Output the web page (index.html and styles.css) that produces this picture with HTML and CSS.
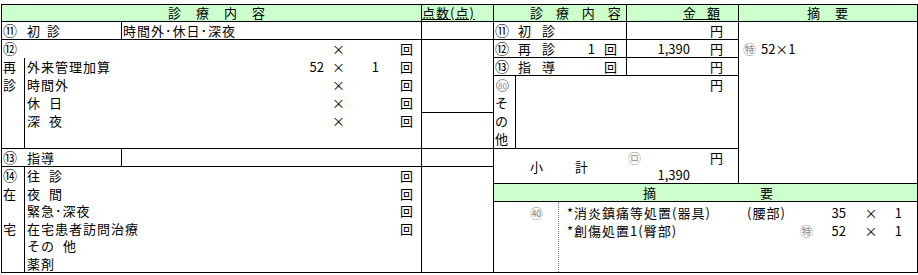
FILE: index.html
```html
<!DOCTYPE html>
<html lang="ja">
<head>
<meta charset="utf-8">
<title>診療内容</title>
<link rel="stylesheet" href="styles.css">
</head>
<body>
<div class="sheet">
  <div class="lp">
    <div class="band hdr">
      <div class="main hd-main">診　療　内　容</div>
      <div class="pts hd-pts"><span class="ul">点数(点)</span></div>
    </div>
    <div class="band h18">
      <div class="main split">
        <div class="sp-a"><span class="cn">⑪</span>初 診</div>
        <div class="sp-b">時間外･休日･深夜</div>
      </div>
      <div class="pts"></div>
    </div>
    <div class="band b12">
      <div class="main">
        <div class="g"><div class="lb"><span class="cn">⑫</span></div><div class="tx"></div><div class="n1"></div><div class="x">×</div><div class="n2"></div><div class="kai">回</div></div>
        <div class="g"><div class="lb bd">再</div><div class="tx">外来管理加算</div><div class="n1">52</div><div class="x">×</div><div class="n2">1</div><div class="kai">回</div></div>
        <div class="g"><div class="lb bd">診</div><div class="tx">時間外</div><div class="n1"></div><div class="x">×</div><div class="n2"></div><div class="kai">回</div></div>
        <div class="g"><div class="lb bd"></div><div class="tx">休 日</div><div class="n1"></div><div class="x">×</div><div class="n2"></div><div class="kai">回</div></div>
        <div class="g"><div class="lb bd"></div><div class="tx">深 夜</div><div class="n1"></div><div class="x">×</div><div class="n2"></div><div class="kai">回</div></div>
        <div class="g"><div class="lb bd"></div><div class="tx"></div><div class="n1"></div><div class="x"></div><div class="n2"></div><div class="kai"></div></div>
      </div>
      <div class="pts">
        <div class="pa"></div>
        <div class="pb"></div>
      </div>
    </div>
    <div class="band h18">
      <div class="main split">
        <div class="sp-a"><span class="cn">⑬</span>指導</div>
        <div class="sp-b"></div>
      </div>
      <div class="pts"></div>
    </div>
    <div class="band b14">
      <div class="main">
        <div class="g g17"><div class="lb bd"><span class="cn">⑭</span></div><div class="tx">往 診</div><div class="n1"></div><div class="x"></div><div class="n2"></div><div class="kai">回</div></div>
        <div class="g g17"><div class="lb bd">在</div><div class="tx">夜 間</div><div class="n1"></div><div class="x"></div><div class="n2"></div><div class="kai">回</div></div>
        <div class="g g17"><div class="lb bd"></div><div class="tx">緊急･深夜</div><div class="n1"></div><div class="x"></div><div class="n2"></div><div class="kai">回</div></div>
        <div class="g g17"><div class="lb bd">宅</div><div class="tx">在宅患者訪問治療</div><div class="n1"></div><div class="x"></div><div class="n2"></div><div class="kai">回</div></div>
        <div class="g g17"><div class="lb bd"></div><div class="tx">その 他</div><div class="n1"></div><div class="x"></div><div class="n2"></div><div class="kai"></div></div>
        <div class="g g17"><div class="lb bd"></div><div class="tx">薬剤</div><div class="n1"></div><div class="x"></div><div class="n2"></div><div class="kai"></div></div>
      </div>
      <div class="pts"></div>
    </div>
  </div>

  <div class="rp">
    <div class="rh">
      <div class="rc-a">診 療 内 容</div>
      <div class="rc-b"><span class="ul">金 額</span></div>
      <div class="rc-c">摘 要</div>
    </div>
    <div class="rbody">
      <div class="rl">
        <div class="rrow">
          <div class="rc1"><div class="rlab"><span class="cn">⑪</span>初 診</div><div class="rn"></div><div class="rk"></div></div>
          <div class="rc2"><div class="amt"></div><div class="yen">円</div></div>
        </div>
        <div class="rrow">
          <div class="rc1"><div class="rlab"><span class="cn">⑫</span>再 診</div><div class="rn">1</div><div class="rk">回</div></div>
          <div class="rc2"><div class="amt">1,390</div><div class="yen">円</div></div>
        </div>
        <div class="rrow">
          <div class="rc1"><div class="rlab"><span class="cn">⑬</span>指 導</div><div class="rn"></div><div class="rk">回</div></div>
          <div class="rc2"><div class="amt"></div><div class="yen">円</div></div>
        </div>
        <div class="b80">
          <div class="l80">
            <div class="lc"><span class="c80">80</span></div>
            <div class="lc">そ</div>
            <div class="lc">の</div>
            <div class="lc">他</div>
          </div>
          <div class="c80col"><div class="yen">円</div></div>
        </div>
        <div class="sub">
          <div class="subl"><span>小</span><span class="kei">計</span></div>
          <div class="subr">
            <div class="sl1"><span class="gc ro">㋺</span><div class="yen">円</div></div>
            <div class="sl2"><div class="amt">1,390</div></div>
          </div>
        </div>
      </div>
      <div class="memo"><span class="gc">㊕</span> 52×1</div>
    </div>
    <div class="rh2"><span>摘</span><span class="you">要</span></div>
    <div class="ent">
      <div class="el"><span class="gc">㊵</span></div>
      <div class="er">
        <div class="erow"><div class="en">*消炎鎮痛等処置(器具)</div><div class="ep">(腰部)</div><div class="et"></div><div class="ea">35</div><div class="ex">×</div><div class="eb">1</div></div>
        <div class="erow"><div class="en">*創傷処置1(臀部)</div><div class="ep"></div><div class="et"><span class="gc">㊕</span></div><div class="ea">52</div><div class="ex">×</div><div class="eb">1</div></div>
      </div>
    </div>
  </div>
</div>
</body>
</html>
```

FILE: styles.css
```css
* { box-sizing: border-box; }
html, body { background: #fff; }
body {
  margin: 0;
  padding: 4px 0 0 1px;
  font-family: "Noto Sans CJK JP", sans-serif;
  font-size: 13px;
  letter-spacing: 1px;
  word-spacing: 2px;
  line-height: 18px;
  color: #000;
}
.sheet {
  display: flex;
  width: 917px;
  border-top: 1px solid #000;
  border-left: 1px solid #000;
}
.ul { text-decoration: underline; }
.cn {
  display: inline-block;
  width: 14px;
  margin-right: 10px;
  font-family: "DejaVu Sans", "Noto Sans CJK JP", sans-serif;
  font-size: 14px;
  letter-spacing: 0;
}
.gc {
  font-size: 13px;
  letter-spacing: 0;
  color: #8a8a8a;
}

/* left part */
.lp { width: 492px; }
.band { display: flex; border-bottom: 1px solid #000; }
.main { width: 420px; border-right: 1px solid #000; }
.pts { width: 72px; border-right: 1px solid #000; }
.hdr { height: 17px; line-height: 16px; background: #ccffcc; white-space: nowrap; }
.hd-main { padding-left: 166px; }
.hd-pts { letter-spacing: 1px; word-spacing: 0; }
.h18 { height: 18px; line-height: 17px; }
.split { display: flex; white-space: nowrap; }
.sp-a { width: 120px; border-right: 1px solid #000; padding-left: 1px; }
.sp-b { flex: 1; padding-left: 1px; }
.b12 { height: 109px; }
.b14 { height: 106px; }
.g {
  display: grid;
  grid-template-columns: 23px 1fr 40px 15px 33px 42px;
  height: 18px;
  white-space: nowrap;
}
.g17 { height: 17.5px; line-height: 17.5px; }
.lb { padding-left: 1px; }
.lb .cn { margin-right: 0; }
.lb.bd { border-right: 1px solid #000; }
.tx { padding-left: 2px; word-spacing: 4px; }
.n1 { text-align: right; padding-right: 7px; letter-spacing: 0; }
.x { text-align: center; letter-spacing: 0; }
.n2 { text-align: right; letter-spacing: 0; }
.kai { padding-left: 21px; }
.pa { height: 73px; border-bottom: 1px solid #000; }

/* right part */
.rp { width: 424px; }
.rh {
  display: flex;
  height: 17px;
  line-height: 16px;
  background: #ccffcc;
  border-bottom: 1px solid #000;
  white-space: nowrap;
}
.rc-a { width: 133px; border-right: 1px solid #000; padding-left: 36px; word-spacing: 8px; }
.rc-b { width: 112px; border-right: 1px solid #000; padding-left: 56px; letter-spacing: 0; word-spacing: 8px; }
.rc-c { width: 179px; border-right: 1px solid #000; text-align: center; word-spacing: 10px; }
.rbody { display: flex; border-bottom: 1px solid #000; }
.rl { width: 245px; border-right: 1px solid #000; }
.memo { width: 179px; border-right: 1px solid #000; padding: 18px 0 0 4px; line-height: 17px; letter-spacing: 0; }
.rrow { display: flex; height: 18px; line-height: 17px; border-bottom: 1px solid #000; }
.rc1 { width: 133px; border-right: 1px solid #000; display: flex; }
.rlab { flex: 1; padding-left: 1px; word-spacing: 6px; white-space: nowrap; }
.rlab .cn { margin-right: 9px; }
.rn { width: 20px; margin-right: 9px; text-align: right; letter-spacing: 0; }
.rk { width: 22px; }
.rc2 { flex: 1; display: flex; }
.amt { width: 63px; text-align: right; letter-spacing: 0; }
.yen { margin-left: auto; width: 28px; }
.b80 { display: flex; height: 73px; border-bottom: 1px solid #000; }
.l80 { width: 22px; border-right: 1px solid #000; }
.lc { height: 18px; padding-left: 1px; line-height: 18px; }
.c80 {
  display: inline-flex;
  align-items: center;
  justify-content: center;
  width: 13px;
  height: 13px;
  margin: 3px 0 0 1px;
  border: 1px solid #8a8a8a;
  border-radius: 50%;
  font-size: 8px;
  letter-spacing: 0;
  line-height: 1;
  color: #8a8a8a;
  vertical-align: top;
}
.c80col { flex: 1; display: flex; }
.sub { display: flex; height: 34px; line-height: 17px; }
.subl { width: 133px; display: flex; align-items: center; padding-left: 36px; }
.kei { margin-left: 31px; }
.subr { flex: 1; }
.sl1 { display: flex; height: 17px; }
.ro { margin-left: 1px; }
.sl2 { display: flex; height: 17px; }
.rh2 {
  height: 18px;
  line-height: 17px;
  background: #ccffcc;
  border-bottom: 1px solid #000;
  border-right: 1px solid #000;
  padding-left: 149px;
}
.you { margin-left: 103px; }
.ent { display: flex; height: 71px; border-bottom: 1px solid #000; border-right: 1px solid #000; }
.el { width: 65px; border-right: 1px dotted #808080; padding: 2px 0 0 36px; line-height: 18px; }
.er { flex: 1; padding-top: 2px; }
.erow { display: flex; height: 18px; line-height: 18px; white-space: nowrap; }
.en { width: 188px; padding-left: 8px; letter-spacing: 1px; }
.ep { width: 53px; }
.et { width: 26px; }
.ea { width: 22px; text-align: right; padding-right: 2px; letter-spacing: 0; }
.ex { width: 46px; text-align: center; letter-spacing: 0; }
.eb { width: 8px; text-align: right; letter-spacing: 0; }
```
